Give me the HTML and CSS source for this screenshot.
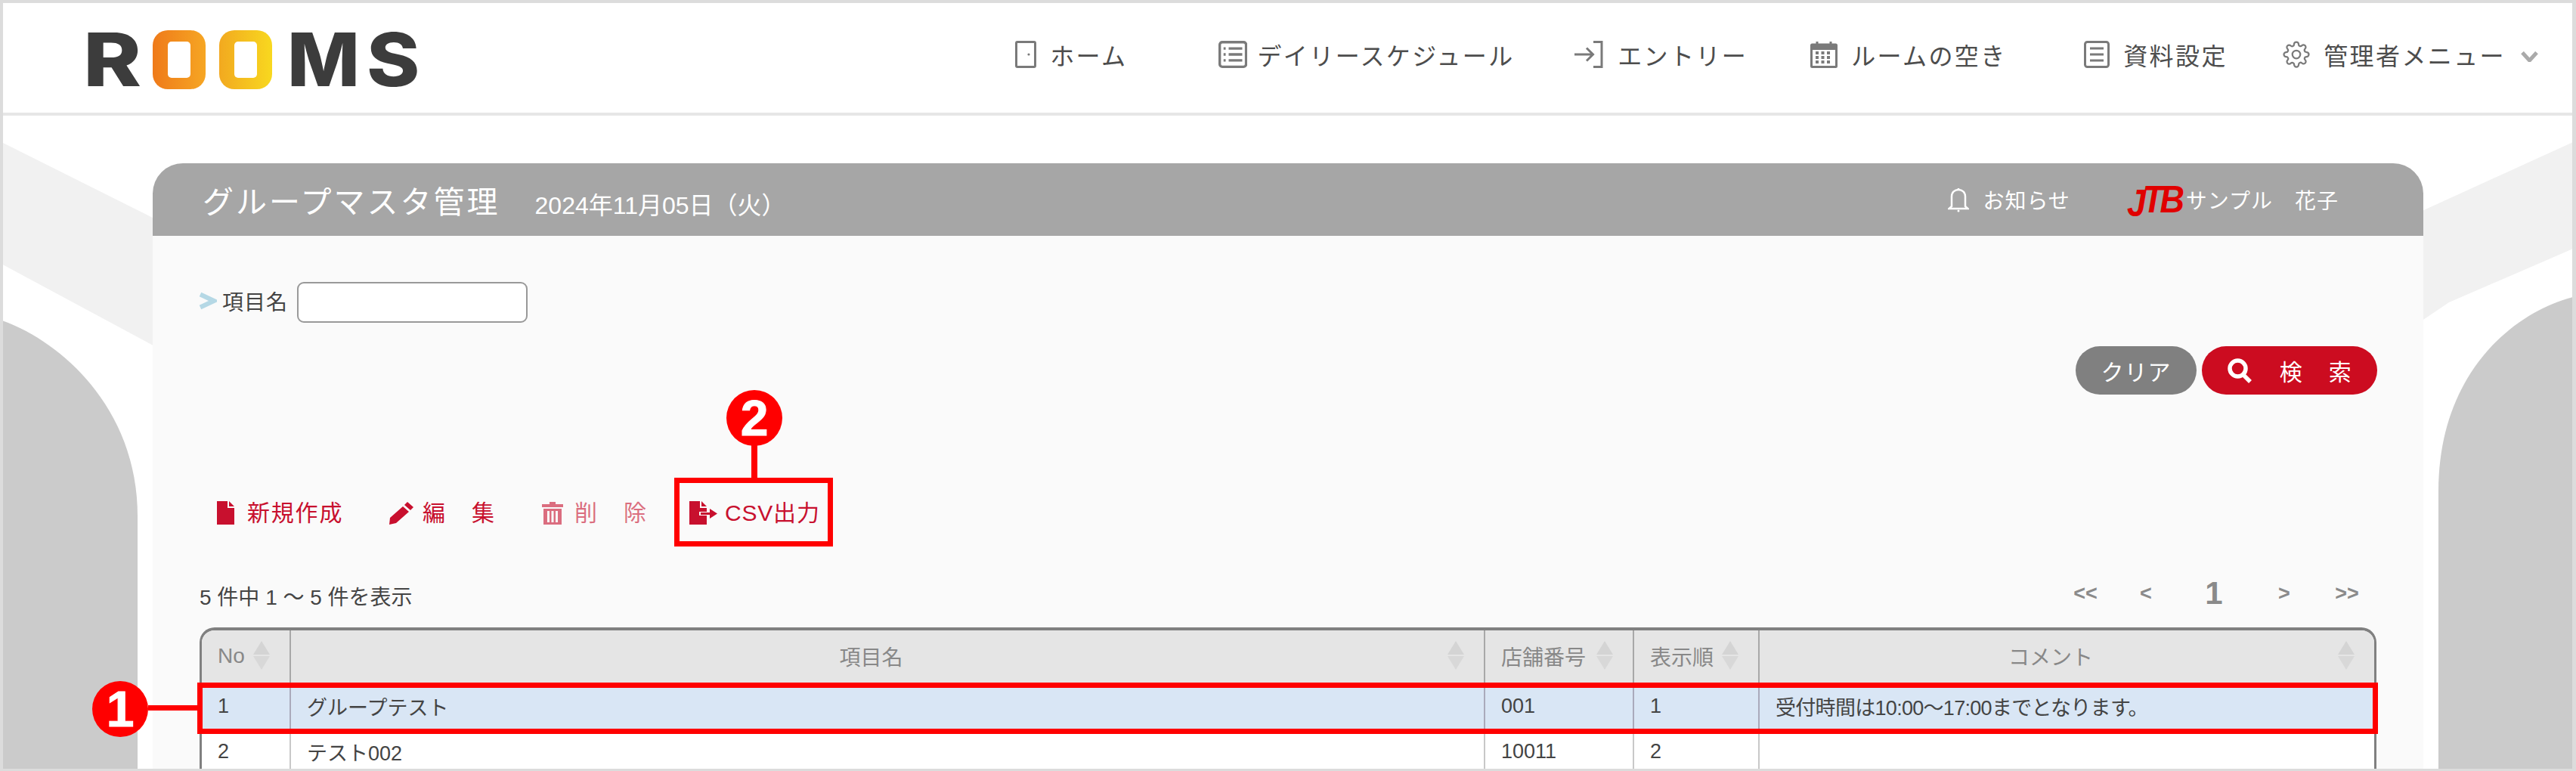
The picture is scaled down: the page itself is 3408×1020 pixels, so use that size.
FILE: index.html
```html
<!DOCTYPE html>
<html lang="ja">
<head>
    <meta charset="UTF-8">
    <title>グループマスタ管理</title>
    <link rel="stylesheet" href="styles.css">
</head>
<body>
<div class="frame">
    <svg class="backdrop" viewBox="0 0 3408 1020" width="3408" height="1020">
        <polygon class="band" points="0,187 210,292 210,461 0,348"/>
        <polygon class="band" points="3404,188 3200,281 3200,427 3240,400 3404,329"/>
        <path class="arch" d="M0 423C80 450 182 540 182 683V1020H0Z"/>
        <path class="arch" d="M3408 392C3330 410 3226 490 3226 650V1020H3408Z"/>
    </svg>

    <header class="topbar">
        <div class="logo">
            <span class="logo-r">R</span>
            <span class="logo-o logo-o1">O</span>
            <span class="logo-o logo-o2">O</span>
            <span class="logo-m">M</span>
            <span class="logo-s">S</span>
        </div>
        <nav class="nav">
            <a class="nav-item">
                <svg class="nav-icon" viewBox="0 0 28 36"><rect x="1.5" y="1.5" width="25" height="33" rx="1.5"/><circle class="fill" cx="18" cy="18" r="1.6"/></svg>
                ホーム
            </a>
            <a class="nav-item nav-tight">
                <svg class="nav-icon" viewBox="0 0 34 32"><rect x="1.5" y="1.5" width="31" height="29" rx="3"/><path d="M12 9H28M12 16H28M12 23H28M6 9H8.500M6 16H8.500M6 23H8.500"/></svg>
                デイリースケジュール
            </a>
            <a class="nav-item">
                <svg class="nav-icon" viewBox="0 0 40 36"><path d="M26 1.500H37V34.500H26M1 18H25M17 9.500L25.500 18L17 26.500"/></svg>
                エントリー
            </a>
            <a class="nav-item">
                <svg class="nav-icon" viewBox="0 0 36 36"><rect x="1.500" y="5" width="33" height="29.500" rx="1"/><path class="solid" d="M1 5H35V12H1Z"/><path d="M9 1V7M27 1V7"/><path class="grid-dots" d="M7 16H29M7 22H29M7 28H29"/></svg>
                ルームの空き
            </a>
            <a class="nav-item">
                <svg class="nav-icon" viewBox="0 0 34 36"><rect x="1.500" y="1.500" width="31" height="33" rx="3"/><path d="M8 10H26M8 18H26M8 26H26"/></svg>
                資料設定
            </a>
            <a class="nav-item nav-last">
                <svg class="nav-icon nav-gear" viewBox="0 0 24 24"><circle cx="12" cy="12" r="3.500"/><path d="M19.400 15a1.650 1.650 0 0 0 .33 1.820l.06.06a2 2 0 0 1 0 2.830 2 2 0 0 1-2.830 0l-.06-.06a1.650 1.650 0 0 0-1.820-.33 1.650 1.650 0 0 0-1 1.510V21a2 2 0 0 1-2 2 2 2 0 0 1-2-2v-.09A1.650 1.650 0 0 0 9 19.400a1.650 1.650 0 0 0-1.820.33l-.06.06a2 2 0 0 1-2.830 0 2 2 0 0 1 0-2.830l.06-.06a1.650 1.650 0 0 0 .33-1.820 1.650 1.650 0 0 0-1.510-1H3a2 2 0 0 1-2-2 2 2 0 0 1 2-2h.09A1.650 1.650 0 0 0 4.600 9a1.650 1.650 0 0 0-.33-1.820l-.06-.06a2 2 0 0 1 0-2.830 2 2 0 0 1 2.830 0l.06.06a1.650 1.650 0 0 0 1.820.33H9a1.650 1.650 0 0 0 1-1.510V3a2 2 0 0 1 2-2 2 2 0 0 1 2 2v.09a1.650 1.650 0 0 0 1 1.510 1.650 1.650 0 0 0 1.820-.33l.06-.06a2 2 0 0 1 2.830 0 2 2 0 0 1 0 2.830l-.06.06a1.650 1.650 0 0 0-.33 1.820V9a1.650 1.650 0 0 0 1.510 1H21a2 2 0 0 1 2 2 2 2 0 0 1-2 2h-.09a1.650 1.650 0 0 0-1.510 1z"/></svg>
                管理者メニュー
                <svg class="nav-caret" viewBox="0 0 23 14"><path d="M2 1.500L11.500 12L21 1.500"/></svg>
            </a>
        </nav>
    </header>

    <main class="card">
        <div class="card-head">
            <h1 class="card-title">グループマスタ管理</h1>
            <span class="card-date">2024年11月05日（火）</span>
            <span class="notice">
                <svg class="bell" viewBox="0 0 28 33"><path d="M5 25V12C5 6.500 9 3 14 3S23 6.500 23 12V25L26.500 28H1.500ZM14 1V3"/><circle cx="14" cy="31" r="1.500"/></svg>
                お知らせ
            </span>
            <span class="user"><span class="jtb"><span class="jtb-j">J</span>TB</span>サンプル　花子</span>
        </div>

        <div class="card-body">
            <div class="filter">
                <svg class="filter-mark" viewBox="0 0 24 24"><path d="M2 3.500L20 12L2 20.500"/></svg>
                <label class="filter-label">項目名</label>
                <input class="filter-input" type="text">
            </div>

            <div class="search-btns">
                <button class="btn btn-clear">クリア</button>
                <button class="btn btn-search">
                    <svg class="btn-icon" viewBox="0 0 32 33"><circle cx="13.500" cy="13.500" r="10.500"/><path d="M21 22L30 31"/></svg>
                    <span class="btn-wide">検　索</span>
                </button>
            </div>

            <div class="toolbar">
                <a class="tool">
                    <svg class="tool-icon" viewBox="0 0 23 31"><path d="M0 0H14V9H23V31H0ZM16 0L23 7H16Z"/></svg>
                    <span>新規作成</span>
                </a>
                <a class="tool">
                    <svg class="tool-icon icon-wide" viewBox="0 0 34 31"><path d="M25 1L33 8L29 12L21 5ZM19 7L27 14L10 29L1 31L2 22Z"/></svg>
                    <span class="tool-wide">編　集</span>
                </a>
                <a class="tool tool-off">
                    <svg class="tool-icon icon-trash" viewBox="0 0 28 31"><path d="M0 4H10V1H18V4H28V8H0ZM2 10H26V31H2ZM7 13V28H10V13ZM12.500 13V28H15.500V13ZM18 13V28H21V13Z" fill-rule="evenodd"/></svg>
                    <span class="tool-wide">削　除</span>
                </a>
                <a class="tool tool-csv">
                    <svg class="tool-icon icon-csv" viewBox="0 0 37 31"><path d="M0 0H14V9H23V14H13V19H23V31H0ZM16 0L23 7H16ZM15 15H27V10L37 16.500L27 23V18H15Z"/></svg>
                    <span>CSV出力</span>
                    <span class="mark-box">
                        <span class="mark-stem"></span>
                        <span class="mark-badge mark-badge-top">2</span>
                    </span>
                </a>
            </div>

            <div class="list-info">
                <span class="list-count">5 件中 1 〜 5 件を表示</span>
                <div class="pager">
                    <a>&lt;&lt;</a>
                    <a>&lt;</a>
                    <a class="pager-now">1</a>
                    <a>&gt;</a>
                    <a>&gt;&gt;</a>
                </div>
            </div>

            <div class="table-box">
                <div class="table-clip">
                    <table class="records">
                        <colgroup>
                            <col class="col-no"><col class="col-name"><col class="col-store"><col class="col-order"><col class="col-comment">
                        </colgroup>
                        <thead>
                            <tr>
                                <th>No</th>
                                <th class="th-center">項目名</th>
                                <th>店舗番号</th>
                                <th>表示順</th>
                                <th class="th-center">コメント</th>
                            </tr>
                        </thead>
                        <tbody>
                            <tr class="row-selected">
                                <td>1</td>
                                <td>グループテスト</td>
                                <td>001</td>
                                <td>1</td>
                                <td class="td-comment">受付時間は10:00〜17:00までとなります。</td>
                            </tr>
                            <tr>
                                <td>2</td>
                                <td>テスト002</td>
                                <td>10011</td>
                                <td>2</td>
                                <td></td>
                            </tr>
                        </tbody>
                    </table>
                </div>
                <div class="row-mark">
                    <span class="row-mark-stem"></span>
                    <span class="mark-badge mark-badge-left">1</span>
                </div>
            </div>
        </div>
    </main>
</div>
</body>
</html>
```

FILE: styles.css
```css
* {
    box-sizing: border-box;
}
body {
    margin: 0;
    font-family: "Liberation Sans", "Noto Sans CJK JP", sans-serif;
    color: #444;
    background: #fff;
}
.frame {
    position: relative;
    width: 3408px;
    height: 1020px;
    overflow: hidden;
    border-style: solid;
    border-color: #dcdcdc;
    border-width: 4px 5px 3px 4px;
    background: #fff;
}
.backdrop {
    position: absolute;
    top: -4px;
    left: -4px;
}
.band {
    fill: #f1f1f1;
}
.arch {
    fill: #cbcbcb;
}

/* top bar */
.topbar {
    position: relative;
    display: flex;
    justify-content: space-between;
    align-items: center;
    height: 149px;
    padding: 0 45px 0 106px;
    background: #fff;
    border-bottom: 4px solid #e6e6e6;
}
.logo {
    display: flex;
    align-items: center;
    height: 78px;
    margin-top: 4px;
    font-family: Inter, "Liberation Sans", sans-serif;
    font-size: 97px;
    font-weight: 800;
    line-height: 78px;
    color: #3c3c3c;
}
.logo-r,
.logo-m,
.logo-s {
    transform-origin: left center;
}
.logo-r {
    width: 92px;
    transform: scaleX(1.2);
}
.logo-m {
    width: 105px;
    margin-left: 20px;
    transform: scaleX(1.05);
}
.logo-s {
    width: 72px;
    transform: scaleX(1.1);
}
.logo-o {
    position: relative;
    width: 70px;
    height: 78px;
    border-radius: 20px;
    color: transparent;
    font-size: 20px;
}
.logo-o::after {
    content: "";
    position: absolute;
    top: 15px;
    right: 20px;
    bottom: 15px;
    left: 20px;
    border-radius: 5px;
    background: #fff;
}
.logo-o1 {
    background: linear-gradient(90deg, #ef7a1a, #f6a623);
    margin-right: 18px;
}
.logo-o2 {
    background: linear-gradient(90deg, #f2a920, #f8d81f);
}
.nav {
    display: grid;
    grid-template-columns: 269px 470px 313px 362px 263px auto;
    align-items: center;
    margin-bottom: 10px;
}
.nav-item {
    display: flex;
    align-items: center;
    gap: 18px;
    font-size: 32px;
    letter-spacing: 2.4px;
    color: #4d4d4d;
    white-space: nowrap;
}
.nav-tight {
    gap: 13px;
}
.nav-icon {
    height: 36px;
    width: auto;
    fill: none;
    stroke: #7a7a7a;
    stroke-width: 3;
}
.nav-icon .fill {
    fill: #7a7a7a;
    stroke: none;
}
.nav-icon .solid {
    fill: #7a7a7a;
    stroke: none;
}
.nav-icon .grid-dots {
    stroke-width: 4;
    stroke-dasharray: 4 3.500;
}
.nav-gear {
    stroke-width: 1.500;
}
.nav-caret {
    width: 23px;
    height: 14px;
    margin: 6px 0 0 2px;
    fill: none;
    stroke: #aaa;
    stroke-width: 5;
}

/* card */
.card {
    position: relative;
    margin: 63px 197px 0 198px;
    height: 900px;
    background: #fafafa;
    border-radius: 40px 40px 0 0;
}
.card-head {
    display: flex;
    align-items: center;
    height: 96px;
    padding: 0 112px 0 66px;
    background: #a6a6a6;
    border-radius: 40px 40px 0 0;
    color: #fff;
}
.card-title {
    margin: 0;
    font-size: 41px;
    font-weight: normal;
    letter-spacing: 3px;
}
.card-date {
    margin: 10px 0 0 46px;
    font-size: 32px;
}
.notice {
    display: flex;
    align-items: center;
    gap: 18px;
    margin-left: auto;
    font-size: 28px;
    letter-spacing: 1px;
}
.bell {
    width: 28px;
    height: 33px;
    fill: none;
    stroke: #fff;
    stroke-width: 2.500;
}
.bell circle {
    fill: #fff;
    stroke: none;
}
.user {
    display: flex;
    align-items: center;
    margin-left: 75px;
    font-size: 28px;
    letter-spacing: 1px;
}
.jtb {
    flex: none;
    width: 78px;
    font-size: 50px;
    font-weight: bold;
    font-style: italic;
    letter-spacing: -5px;
    line-height: 1;
    white-space: nowrap;
    color: #e00000;
    transform: scaleX(.9);
    transform-origin: left center;
}
.jtb-j {
    display: inline-block;
    transform: translateY(5px);
}
.card-body {
    padding: 61px 61px 0;
}

/* filter */
.filter {
    display: flex;
    align-items: center;
    height: 54px;
}
.filter-mark {
    width: 24px;
    height: 24px;
    margin-top: -4px;
    fill: none;
    stroke: #b5d8e5;
    stroke-width: 6;
}
.filter-label {
    margin: -4px 0 0 7px;
    font-size: 28px;
    letter-spacing: 1px;
}
.filter-input {
    width: 305px;
    height: 54px;
    margin-left: 12px;
    background: #fff;
    border: 2px solid #999;
    border-radius: 9px;
}
.search-btns {
    display: flex;
    justify-content: flex-end;
    gap: 7px;
    margin-top: 31px;
}
.btn {
    display: flex;
    align-items: center;
    justify-content: center;
    height: 64px;
    padding: 0;
    border: none;
    border-radius: 32px;
    font-family: inherit;
    font-size: 30px;
    color: #fff;
}
.btn-clear {
    width: 160px;
    background: #808080;
    letter-spacing: 1px;
}
.btn-search {
    gap: 37px;
    width: 232px;
    padding-left: 2px;
    background: #cc0c20;
}
.btn-icon {
    width: 32px;
    height: 33px;
    fill: none;
    stroke: #fff;
    stroke-width: 5.500;
}
.btn-wide {
    letter-spacing: 2.500px;
}

/* toolbar */
.toolbar {
    display: grid;
    grid-template-columns: 227px 203px 195px auto;
    justify-content: start;
    align-items: center;
    height: 40px;
    margin: 136px 0 0 24px;
}
.tool {
    position: relative;
    display: flex;
    align-items: center;
    gap: 17px;
    font-size: 30px;
    letter-spacing: 1.800px;
    color: #c8102e;
    white-space: nowrap;
}
.tool span:not(.mark-box):not(.mark-stem):not(.mark-badge) {
    margin-top: -4px;
}
.tool-icon {
    width: 23px;
    height: 31px;
    fill: #c8102e;
}
.icon-wide {
    width: 34px;
}
.icon-trash {
    width: 28px;
}
.icon-csv {
    width: 37px;
}
.tool-csv {
    gap: 10px;
    letter-spacing: .8px;
}
.tool-off {
    opacity: .6;
}
.tool-wide {
    margin-left: -6px;
    letter-spacing: 2.500px;
}
.tool-off .tool-wide {
    margin-left: -2px;
}
.mark-box {
    position: absolute;
    top: -26px;
    right: -17px;
    bottom: -25px;
    left: -20px;
    border: 7px solid #f00;
}
.mark-stem {
    position: absolute;
    left: 95px;
    top: -50px;
    width: 8px;
    height: 44px;
    background: #f00;
}
.mark-badge {
    position: absolute;
    width: 74px;
    height: 74px;
    border-radius: 50%;
    background: #f00;
    color: #fff;
    font-family: "Liberation Sans", sans-serif;
    font-size: 66px;
    font-weight: bold;
    line-height: 74px;
    letter-spacing: 0;
    text-align: center;
    -webkit-text-stroke: 1px #fff;
}
.mark-badge-top {
    left: 62px;
    top: -123px;
}
.mark-badge-left {
    left: -146px;
    top: -9px;
}

/* list */
.list-info {
    display: flex;
    justify-content: space-between;
    align-items: center;
    height: 50px;
    margin-top: 62px;
}
.list-count {
    margin: 6px 0 0 1px;
    font-size: 28px;
}
.pager {
    display: grid;
    grid-template-columns: 80px 80px 100px 86px 80px;
    align-items: center;
    text-align: center;
    font-size: 27px;
    font-weight: bold;
    color: #8a8a8a;
}
.pager-now {
    font-size: 42px;
}
.table-box {
    position: relative;
    margin: 20px 1px 0 1px;
}
.table-clip {
    overflow: hidden;
    border-style: solid;
    border-color: #808080;
    border-width: 4px 3px 0;
    border-radius: 20px 20px 0 0;
}
.records {
    width: 100%;
    table-layout: fixed;
    border-collapse: collapse;
    font-size: 27px;
}
.col-no {
    width: 117px;
}
.col-name {
    width: 1580px;
}
.col-store {
    width: 197px;
}
.col-order {
    width: 166px;
}
.records th {
    position: relative;
    height: 73px;
    padding: 0 0 6px 21px;
    background: #e5e5e5;
    color: #888;
    font-size: 28px;
    font-weight: normal;
    text-align: left;
    border-left: 2px solid #a8a8a8;
}
.records th::before,
.records th::after {
    content: "";
    position: absolute;
    right: 26px;
    border-left: 11px solid transparent;
    border-right: 11px solid transparent;
}
.records th::before {
    top: 14px;
    border-bottom: 18px solid #d4d4d4;
}
.records th::after {
    top: 34px;
    border-top: 18px solid #d8d8d8;
}
.records th.th-center {
    padding-right: 64px;
    text-align: center;
}
.records td {
    height: 60px;
    padding: 0 0 5px 21px;
    background: #fff;
    border-left: 2px solid #c8c8c8;
    white-space: nowrap;
}
.records .td-comment {
    letter-spacing: -.7px;
}
.records th:first-child,
.records td:first-child {
    border-left: none;
}
.row-selected td {
    background: #d9e6f5;
    border-left-color: #aab;
}
.row-mark {
    position: absolute;
    top: 73px;
    left: -3px;
    right: -2px;
    height: 68px;
    border: 7px solid #f00;
}
.row-mark-stem {
    position: absolute;
    top: 23px;
    left: -72px;
    width: 68px;
    height: 7px;
    background: #f00;
}
```
